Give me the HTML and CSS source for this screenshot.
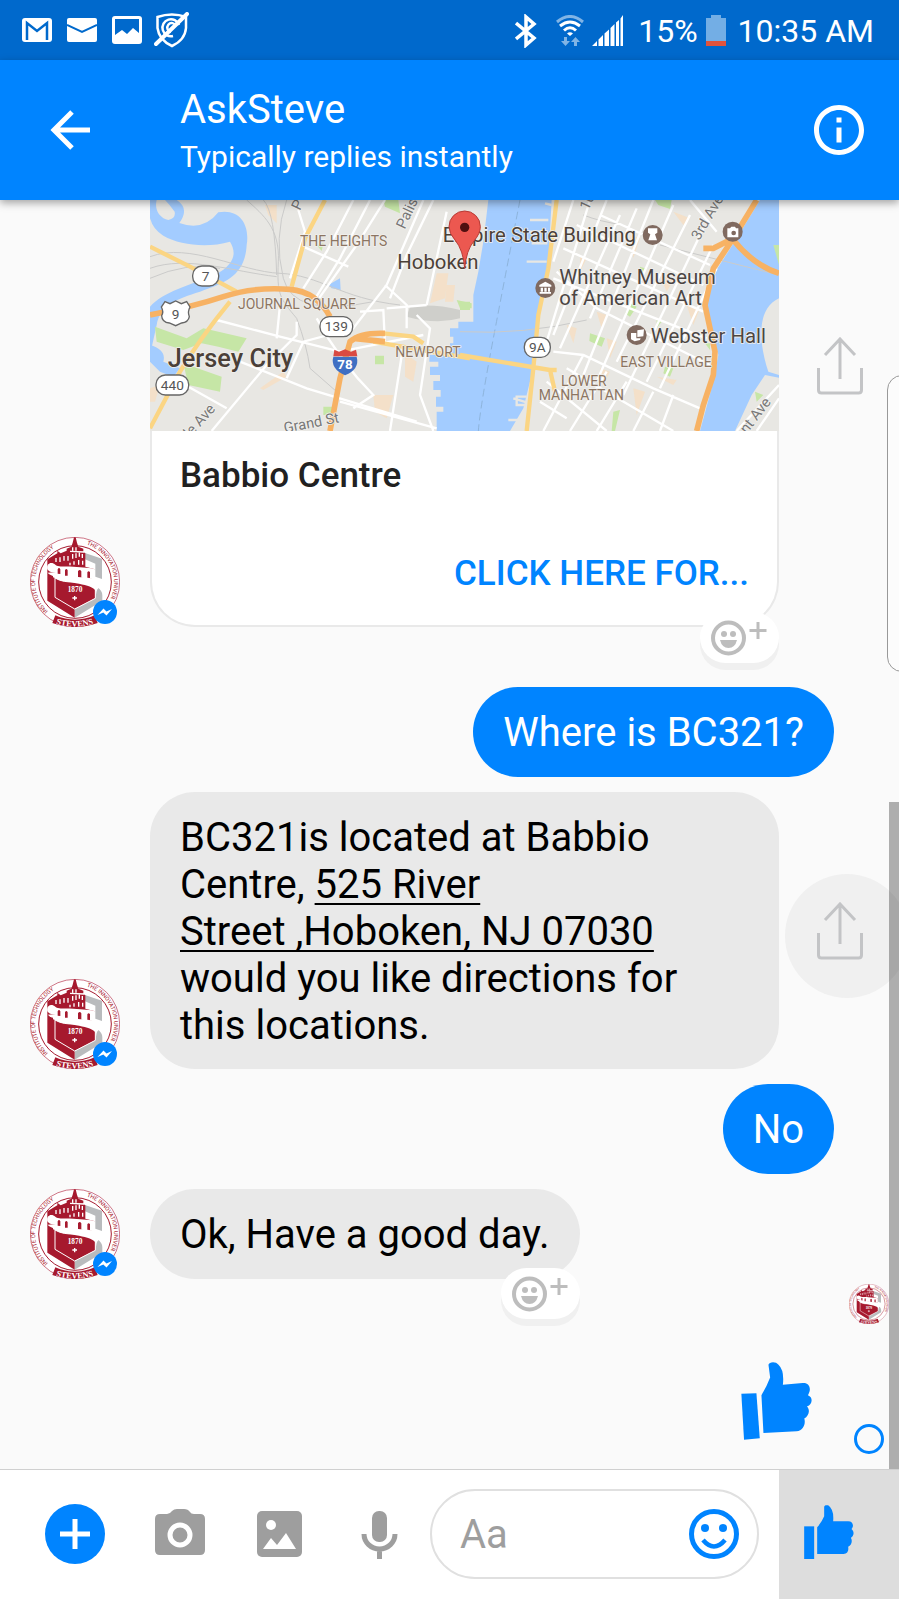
FILE: index.html
```html
<!DOCTYPE html>
<html lang="en">
<head>
<meta charset="utf-8">
<meta name="viewport" content="width=device-width, initial-scale=1">
<title>AskSteve</title>
<link rel="stylesheet" href="styles.css">
</head>
<body>

<svg class="defs" aria-hidden="true">
  <symbol id="seal" viewBox="30 21 270 270">
    <circle cx="165" cy="156" r="134" fill="#fff" stroke="#b5304a" stroke-width="2"/>
    <circle cx="165" cy="156" r="109" fill="none" stroke="#a6192e" stroke-width="3"/>
    <path id="arc-left" d="M84 244A119 119 0 0 1 144 39" fill="none"/>
    <path id="arc-right" d="M200 44A117 117 0 0 1 270 208" fill="none"/>
    <path id="arc-base" d="M108 281Q165 298 222 281" fill="none"/>
    <g font-family="Roboto, sans-serif" font-size="17" fill="#a6192e">
      <text><textPath href="#arc-left">INSTITUTE OF TECHNOLOGY</textPath></text>
      <text><textPath href="#arc-right">THE INNOVATION UNIVERSITY</textPath></text>
    </g>
    <path d="M195 69 246 86V147L226 140V101L195 88Z" fill="#b9bbbd"/>
    <path d="M232 172Q247 182 247 196L247 212 164 263V238L226 205Z" fill="#b9bbbd"/>
    <path d="M82 88 112 70V62L122 70 140 62V56L154 50 158 38 162 22H167L171 38 175 50 190 56V66L196 70V110L225 118V146L170 140 112 126 82 128Z" fill="#a6192e"/>
    <path d="M158 52V62M168 52V62M158 72V86M168 70V84M178 68V80M187 72V84M108 84V96M120 82V96M132 78V92M144 78V92M150 98V106M162 94V104M176 90V104M188 92V104M150 64 192 66" stroke="#fff" stroke-width="4"/>
    <path d="M82 118C78 98 96 94 106 104C112 112 138 108 160 110C188 113 214 112 225 118V148C190 142 150 144 120 132C104 126 90 130 82 118Z" fill="#fff"/>
    <path d="M113 131V118Q117 110 121 118V132ZM135 137V121Q139 113 143 121V137ZM174 141V124Q179 116 184 124V142ZM202 143V127Q206 120 210 127V144Z" fill="#a6192e"/>
    <path d="M82 127Q90 138 106 139V199L164 235V263L82 212Z" fill="#a6192e"/>
    <path d="M105 144C140 166 190 148 226 166V205L164 237 105 202Z" fill="#a6192e" stroke="#fff" stroke-width="3"/>
    <path d="M99 132C140 154 214 138 240 168L228 184C214 160 150 162 99 142Z" fill="#fff"/>
    <text x="165" y="187" text-anchor="middle" font-family="'Liberation Serif', serif" font-weight="700" font-size="22" fill="#fff">1870</text>
    <path d="M164 198V211M157 204H171" stroke="#fff" stroke-width="4"/>
    <path d="M106 256Q165 282 224 256L233 279Q165 303 97 279Z" fill="#a6192e"/>
    <text font-family="'Liberation Serif', serif" font-weight="700" font-size="25" fill="#fff"><textPath href="#arc-base">STEVENS</textPath></text>
  </symbol>
  <symbol id="bolt" viewBox="0 0 24 24">
    <circle cx="12" cy="12" r="12" fill="#0084ff"/>
    <path d="M4.500 15 10.500 8.500 13.500 11.500 19 9 13.500 15.500 10.300 12.500Z" fill="#fff"/>
  </symbol>
  <symbol id="share" viewBox="0 0 46 58">
    <path d="M1.500 31V53Q1.500 56 4.500 56H41.500Q44.500 56 44.500 53V31M23 42V3M8 18 23 2 38 18" fill="none" stroke="#c3c4c6" stroke-width="3"/>
  </symbol>
  <symbol id="react" viewBox="0 0 56 36">
    <circle cx="17.500" cy="18" r="15.500" fill="none" stroke="#bdbdbd" stroke-width="4"/>
    <circle cx="13" cy="14" r="3" fill="#bdbdbd"/><circle cx="22" cy="14" r="3" fill="#bdbdbd"/>
    <path d="M9 20H26Q24 28 17.500 28Q11 28 9 20Z" fill="#bdbdbd"/>
    <path d="M47 2V19M38.500 10.500H55.500" stroke="#bdbdbd" stroke-width="3"/>
  </symbol>
</svg>

<div class="status-bar">
  <div class="status-left">
    <svg width="30" height="24" viewBox="0 0 30 24"><rect width="30" height="24" rx="3" fill="#fff"/><path d="M5 22V5L15 13 25 5V22" fill="none" stroke="#0069cc" stroke-width="2.500"/></svg>
    <svg width="30" height="24" viewBox="0 0 30 24"><rect width="30" height="24" rx="2" fill="#fff"/><path d="M0 7 15 14 30 7" fill="none" stroke="#0069cc" stroke-width="2"/></svg>
    <svg width="30" height="28" viewBox="0 0 30 28"><rect width="30" height="28" rx="3" fill="#fff"/><path d="M3 3H27V17L21 12 15 18 10 14 3 19Z" fill="#0069cc"/></svg>
    <svg class="shield" width="35" height="36" viewBox="0 0 35 36" fill="none" stroke="#fff"><path d="M3.500 5Q18 0 32 5V16Q31 28 18 34Q5 28 3.500 16Z" stroke-width="2.500"/><path d="M25 13A8.500 8.500 0 1 0 19 24M22 14A4.500 4.500 0 1 0 17 20" stroke-width="2.500"/><path d="M2 32 33 2" stroke-width="4" stroke-linecap="round"/></svg>
  </div>
  <div class="status-right">
    <svg width="22" height="34" viewBox="0 0 22 34"><path d="M1 9 19 24 11 31V3L19 10 1 25" fill="none" stroke="#fff" stroke-width="3.500"/></svg>
    <svg class="wifi" width="28" height="32" viewBox="0 0 28 32" fill="none" stroke="#fff" stroke-width="3"><path d="M1 7Q14-4 27 7" opacity=".5"/><path d="M4 11Q14 3 24 11M8 15.500Q14 10 20 15.500"/><path d="M11 18.500Q14 16 17 18.500L14 21Z" fill="#fff" stroke="none"/><g fill="#fff" stroke="none" opacity=".5"><path d="M8 22H11V26H14L9.500 31 5 26H8Z"/><path d="M18 31H21V27H24L19.500 22 15 27H18Z"/></g></svg>
    <svg class="signal" width="32" height="31" viewBox="0 0 32 31" fill="#fff"><path d="M0 31 5 26V31ZM6.500 24.500 11 20V31H6.500ZM12.500 18.500 17 14.500V31H12.500ZM18.500 13 22.500 9V31H18.500ZM24 7.500 27 5V31H24ZM28.500 3.500 31 0V31H28.500Z"/></svg>
    <span>15%</span>
    <svg class="battery" width="20" height="31" viewBox="0 0 20 31"><path d="M0 3H5V0H15V3H20V26H0Z" fill="#73aee5"/><path d="M0 26H20V31H0Z" fill="#e0533c"/></svg>
    <time>10:35 AM</time>
  </div>
</div>

<header class="app-bar">
  <button class="icon-button back" aria-label="Back"><svg width="40" height="40" viewBox="0 0 40 40"><path d="M40 20H3M22 2 4 20 22 38" fill="none" stroke="#fff" stroke-width="5"/></svg></button>
  <div class="heading">
    <h1>AskSteve</h1>
    <p>Typically replies instantly</p>
  </div>
  <button class="icon-button" aria-label="Conversation info"><svg width="60" height="60" viewBox="0 0 24 24" fill="#fff"><path d="M11 17h2v-6h-2v6zm1-15C6.480 2 2 6.480 2 12s4.480 10 10 10 10-4.480 10-10S17.520 2 12 2zm0 18c-4.410 0-8-3.590-8-8s3.590-8 8-8 8 3.590 8 8-3.590 8-8 8zM11 9h2V7h-2v2z"/></svg></button>
</header>

<main class="chat">
  <section class="row incoming row-card">
    <div class="avatar"><svg class="seal"><use href="#seal"/></svg><svg class="badge"><use href="#bolt"/></svg></div>
    <article class="card">
      <svg class="map" viewBox="30 15 1887 693" preserveAspectRatio="xMidYMid slice" role="img" aria-label="Map of Hoboken">
        <rect x="30" y="15" width="1887" height="693" fill="#e8e7e3"/>
        <g fill="#a3ccff">
          <path d="M30 15H50C42 45 60 70 85 75Q108 70 104 50Q90 30 75 15H110Q150 40 118 84Q190 110 235 52C300 40 330 90 320 150C315 240 260 262 180 290C110 312 60 330 50 390L30 480V335C70 290 150 270 225 240C290 205 288 170 270 140C200 160 120 150 70 122Q40 105 30 70Z"/>
          <path d="M30 450Q80 465 70 500L120 520 100 545 60 530 30 500ZM155 525 185 550 170 560ZM565 270 600 250 602 285 575 280Z"/>
          <path d="M1045 15H1235L1225 200 1195 340 1180 520 1150 640 1110 708H890V650H910V635H888V605H902V585H880V558H900V540H870V515H895V500H868V480H930V445H940V425H930V400H955V380H1000V300L1015 230 1030 140Z"/>
          <path d="M1860 15H1917V310C1850 340 1855 440 1885 530L1917 540V548L1875 540 1835 600 1785 708H1680L1720 560 1735 480 1700 340 1720 240 1790 130Z"/>
        </g>
        <path d="M1160 605H1130V630H1165M1160 200H1220M1170 75H1225M1170 110H1220M1175 145H1222M1120 610 1170 625M1105 675H1165V708M1215 25 1235 30" fill="none" stroke="#e8e7e3" stroke-width="7"/>
        <path d="M810 335Q880 325 960 345V370Q890 390 800 365Z" fill="#cfcfcb"/>
        <g fill="#c6e6a6">
          <path d="M45 395 140 430 190 400 320 430 295 470 235 455 185 445 130 465 50 440ZM130 505 245 545 240 590 145 570ZM730 15H775L780 55 735 35ZM705 482H732V508H705ZM550 635H580V660H550ZM960 320H990V345H960ZM530 150 550 145 545 168Z"/>
          <path d="M1350 415 1395 430 1385 455 1348 438ZM1545 15H1595L1590 42 1555 30ZM1500 215 1515 220 1500 245ZM1475 325 1490 335 1470 365 1455 355ZM1550 375 1565 380 1550 400ZM1420 650 1440 645 1425 708H1415ZM1575 515 1600 520 1590 545 1570 535ZM1845 590 1870 600 1850 620ZM1900 150H1917V210ZM1695 445H1710V465ZM950 315 995 325V340H960Z"/>
        </g>
        <g fill="#f6dfc2" opacity=".8">
          <path d="M890 235H925L915 310 870 325ZM920 270H945L940 320H915ZM360 580 430 530 440 545 370 585ZM700 600H760L740 670 705 650ZM795 475 830 500 820 560 795 545ZM375 30H410V85L385 60ZM30 580 60 570 45 620H30Z"/>
          <path d="M1280 390 1310 400 1300 445ZM1370 350 1400 360 1385 400ZM1400 430 1430 440 1410 490ZM1480 580 1515 590 1490 660ZM1380 520 1410 530 1390 570ZM1560 240 1600 255 1580 290ZM1470 120 1500 130 1480 190ZM1600 50 1650 70 1630 90ZM1320 180 1340 190 1320 230ZM1640 330 1680 340 1660 390ZM1550 545 1610 555 1600 570Z"/>
        </g>
        <g fill="none" stroke="#cbcbca" stroke-width="3">
          <path d="M320 15C370 60 420 100 415 200S420 310 470 370Q500 450 510 520L590 590M370 15Q405 50 410 240M30 185C150 140 300 230 420 235S600 310 780 330M30 220C140 180 280 230 410 245M30 250Q140 200 240 220M440 15Q400 130 430 250T700 320"/>
          <path d="M1140 15Q1100 220 1060 430T1015 708" stroke="#8db4dc" stroke-dasharray="24 12"/>
          <path d="M960 410Q1150 420 1340 375M1560 150 1917 240M1330 60Q1380 80 1450 90"/>
        </g>
        <g fill="none" stroke="#fff" stroke-width="7">
          <path d="M475 45 495 110 450 250M640 15 560 170 490 280M690 15 600 190 520 320M735 15 650 150 530 320M850 15 740 270 640 400 490 440 440 550M880 15 800 180 750 310M920 50 860 330M490 155 625 215M735 270 800 330V400M230 375 420 425 600 470 850 420M470 380V420L380 510 215 708M300 500 500 580 830 680M420 330 410 430M530 370Q600 500 700 600L640 640M145 575 260 640M600 620 890 700M830 360 870 400 840 600 880 708M790 450 750 708M660 350 730 345 735 450M740 340 860 330"/>
          <path d="M1300 15 1240 200M1350 15 1220 440M1400 15 1240 420M1440 60 1260 460M1490 40 1350 370M1540 15 1330 540M1600 30 1370 560M1650 60 1430 500M1690 100 1450 600M1720 150 1520 560M1730 220 1560 580M1250 230 1370 340 1710 510M1380 60 1710 210M1310 90 1690 270M1270 160 1690 350M1240 250 1700 430M1240 470 1330 480 1540 580 1680 640M1220 560 1400 708M1280 520 1600 708M1200 620 1280 670M1330 480 1210 708M1400 530 1290 708M1460 560 1370 708M1540 590 1480 708M1600 600 1560 708M1917 570 1790 708M1917 610 1850 708M1650 15 1730 110"/>
        </g>
        <g fill="none" stroke="#fbd583" stroke-width="13">
          <path d="M30 155 150 215 290 290M555 15 495 130 455 275M270 320Q180 430 120 530L30 700M730 415 820 425 850 445M700 440 990 490"/>
          <path d="M960 480 1230 525 1245 590M1230 525H1250M1250 15 1225 220 1195 360 1180 520 1160 708"/>
        </g>
        <g fill="none" stroke="#f7b264" stroke-width="17">
          <path d="M30 360Q160 335 250 305T450 283Q530 290 570 365M735 415Q660 412 630 440L600 550 570 708M735 440 640 430"/>
          <path d="M1850 15 1780 130 1720 220 1695 330 1725 470 1720 540 1690 630 1670 708M1780 135Q1840 210 1917 235M1690 160H1720L1780 130"/>
        </g>
        <g font-family="Roboto, sans-serif" stroke="#f1f0ed" stroke-width="5" paint-order="stroke" stroke-linejoin="round">
          <g fill="#8c7562" font-size="42">
            <text x="480" y="153">THE HEIGHTS</text><text x="294" y="343">JOURNAL SQUARE</text><text x="766" y="485">NEWPORT</text>
            <text x="1441" y="517">EAST VILLAGE</text><text x="1263" y="574">LOWER</text><text x="1196" y="616">MANHATTAN</text>
          </g>
          <g fill="#4b4038">
            <text x="83" y="515" font-size="76" font-weight="500">Jersey City</text>
            <text x="772" y="221" font-size="61">Hoboken</text>
            <text x="908" y="140" font-size="61">Empire State Building</text>
          </g>
          <g fill="#4b4543" font-size="61">
            <text x="1258" y="268">Whitney Museum</text><text x="1258" y="330">of American Art</text><text x="1532" y="444">Webster Hall</text>
          </g>
          <g fill="#777" font-size="44">
            <text transform="translate(480 48) rotate(-65)">P</text><text transform="translate(794 104) rotate(-65)">Palisade</text><text transform="translate(150 730) rotate(-48)">le Ave</text>
            <text transform="translate(434 714) rotate(-11)">Grand St</text><text transform="translate(1345 48) rotate(-65)">10th</text><text transform="translate(1678 138) rotate(-60)">3rd Ave</text><text transform="translate(1820 718) rotate(-52)">nt Ave</text>
          </g>
        </g>
        <g fill="#fff" stroke="#666" stroke-width="4">
          <rect x="158" y="213" width="78" height="60" rx="28"/><rect x="540" y="365" width="98" height="60" rx="28"/><rect x="48" y="540" width="98" height="60" rx="28"/><rect x="1153" y="427" width="78" height="60" rx="28"/>
          <path d="M75 320 90 326 107 318 124 326 140 320 150 336Q142 350 148 365Q145 382 125 384L107 392 88 384Q66 382 65 362Q72 350 64 336Z"/>
        </g>
        <g font-family="Roboto, sans-serif" font-size="41" text-anchor="middle" fill="#555">
          <text x="197" y="258">7</text><text x="107" y="371">9</text><text x="589" y="409">139</text><text x="97" y="584">440</text><text x="1192" y="471">9A</text>
        </g>
        <path d="M580 485H650Q660 522 615 541Q570 520 580 485Z" fill="#3f6fc3"/><path d="M580 484 583 464 597 470 615 463 633 470 648 464 652 484Z" fill="#d94a42"/>
        <text x="615" y="522" font-family="Roboto, sans-serif" font-size="40" font-weight="700" text-anchor="middle" fill="#fff">78</text>
        <g fill="#806a60"><circle cx="1538" cy="120" r="30"/><circle cx="1216" cy="279" r="30"/><circle cx="1490" cy="420" r="30"/><circle cx="1778" cy="110" r="30"/></g>
        <g fill="#fff"><path d="M1524 100H1552V113L1545 118 1551 136H1525L1531 118 1524 113Z"/><path d="M1198 270 1216 260 1234 270V275H1198ZM1202 278H1209V290H1202ZM1213 278H1220V290H1213ZM1224 278H1230V290H1224ZM1199 291H1233V296H1199Z"/><path d="M1492 406 1512 403 1510 424 1492 426ZM1473 414H1489V430H1502L1500 435 1484 439 1473 433Z"/><path d="M1762 100H1770L1774 95H1785L1788 100H1795V127H1762Z"/></g>
        <circle cx="1781" cy="114" r="7" fill="#806a60"/>
        <path d="M974 220Q970 165 945 135Q927 115 927 95A47 47 0 0 1 1021 95Q1021 115 1002 138Q979 165 974 220Z" fill="#ec5850" stroke="#b93b36" stroke-width="3"/><circle cx="974" cy="97" r="14" fill="#501010"/>
      </svg>
      <div class="card-body">
        <h2>Babbio Centre</h2>
        <button class="card-action">CLICK HERE FOR...</button>
      </div>
      <button class="reaction" aria-label="Add reaction"><svg><use href="#react"/></svg></button>
    </article>
    <button class="share" aria-label="Share"><svg><use href="#share"/></svg></button>
  </section>

  <section class="row outgoing first-reply"><p class="bubble">Where is BC321?</p></section>

  <section class="row incoming">
    <div class="avatar"><svg class="seal"><use href="#seal"/></svg><svg class="badge"><use href="#bolt"/></svg></div>
    <p class="bubble">BC321is located at Babbio Centre, <a href="#map">525 River Street&nbsp;,Hoboken, NJ 07030</a> would you like directions for this locations.</p>
    <button class="share pressed" aria-label="Share"><svg><use href="#share"/></svg></button>
  </section>

  <section class="row outgoing"><p class="bubble">No</p></section>

  <section class="row incoming">
    <div class="avatar"><svg class="seal"><use href="#seal"/></svg><svg class="badge"><use href="#bolt"/></svg></div>
    <div class="bubble">Ok, Have a good day.<button class="reaction low" aria-label="Add reaction"><svg><use href="#react"/></svg></button></div>
  </section>

  <div class="seen"><svg width="40" height="40"><use href="#seal"/></svg></div>

  <section class="sticker">
    <svg width="71" height="79" viewBox="184 272 212 236" fill="#0084ff"><path d="M185 370 230 368 240 503 193 507Z"/><path d="M251 487 245 374Q262 345 271 321L266 283C268 274 288 272 296 283Q314 300 309 343L368 338C388 336 396 355 384 374C400 380 398 402 381 408C392 420 386 436 373 444C378 460 370 480 350 482Z"/></svg>
    <span class="sending"></span>
  </section>

  <div class="edge-handle"></div>
  <div class="scrollbar"></div>
</main>

<footer class="composer">
  <div class="tools">
    <button class="icon-button plus" aria-label="More"><svg width="60" height="60" viewBox="0 0 60 60"><circle cx="30" cy="30" r="30" fill="#0084ff"/><path d="M30 15V45M15 30H45" stroke="#fff" stroke-width="5"/></svg></button>
    <button class="icon-button" aria-label="Camera"><svg width="60" height="60" viewBox="0 0 60 60"><path d="M5 15Q5 10 10 10H17Q20 10 22 7Q24 5 27 5H34Q38 5 40 8Q41 10 44 10H50Q55 10 55 15V46Q55 51 50 51H10Q5 51 5 46Z" fill="#9e9e9e"/><circle cx="30" cy="31" r="10" fill="none" stroke="#fff" stroke-width="5"/></svg></button>
    <button class="icon-button" aria-label="Gallery"><svg width="60" height="60" viewBox="0 0 60 60"><rect x="7" y="7" width="45" height="46" rx="5" fill="#9e9e9e"/><circle cx="21" cy="21" r="5" fill="#fff"/><path d="M13 45 21 34 27 41 36 29 46 45Z" fill="#fff"/></svg></button>
    <button class="icon-button" aria-label="Voice"><svg width="60" height="60" viewBox="0 0 60 60"><rect x="22" y="7" width="15" height="31" rx="7" fill="#9e9e9e"/><path d="M14 30A15.500 15 0 0 0 45 30M29.500 45V55" fill="none" stroke="#9e9e9e" stroke-width="5"/></svg></button>
  </div>
  <div class="field">
    <input type="text" placeholder="Aa" aria-label="Message">
    <button class="icon-button" aria-label="Emoji"><svg width="50" height="50" viewBox="0 0 50 50" fill="#0084ff"><circle cx="25" cy="25" r="22.500" fill="none" stroke="#0084ff" stroke-width="5"/><circle cx="16" cy="19" r="4"/><circle cx="34" cy="19" r="4"/><path d="M14 31Q25 44 36 31" fill="none" stroke="#0084ff" stroke-width="4.500"/></svg></button>
  </div>
  <button class="like" aria-label="Send like"><svg width="50" height="54" viewBox="1152 165 149 162" fill="#0084ff"><path d="M1152 229H1182V327H1152Z"/><path d="M1191 312V232Q1205 216 1212 199V172C1212 165 1218 165 1224 166Q1242 178 1239 214H1284C1299 214 1302 229 1294 237C1303 244 1302 258 1292 263C1298 272 1294 286 1284 290C1286 302 1282 312 1270 312Z"/></svg></button>
</footer>

</body>
</html>
```

FILE: styles.css
```css
* { box-sizing: border-box; }

body {
  margin: 0;
  min-height: 100vh;
  display: flex;
  flex-direction: column;
  background: #fafafa;
  color: #000;
  font-family: Roboto, "Noto Sans", sans-serif;
  font-size: 40px;
}

h1, h2, p { margin: 0; font-weight: 400; }
svg { display: block; flex: none; }
.defs { position: absolute; width: 0; height: 0; }

button {
  padding: 0;
  border: 0;
  background: none;
  color: inherit;
  font: inherit;
}

.icon-button { display: flex; flex: none; }

/* Status bar */
.status-bar {
  height: 60px;
  display: flex;
  align-items: center;
  justify-content: space-between;
  padding: 0 25px 0 22px;
  background: #0069cc;
  color: #fff;
  font-size: 32px;
}
.status-left, .status-right { display: flex; align-items: center; }
.status-right { padding-top: 1px; }
.status-left { gap: 15px; }
.shield { margin-left: -3px; }
.wifi { margin-left: 19px; }
.signal { margin: 0 14px 0 8px; }
.battery { margin: 0 12px 0 8px; }

/* Conversation header */
.app-bar {
  position: relative;
  z-index: 2;
  height: 140px;
  display: flex;
  align-items: center;
  padding: 0 30px 0 50px;
  background: #0084ff;
  color: #fff;
  box-shadow: 0 3px 8px rgba(0, 0, 0, .35);
}
.heading { flex: 1; margin-left: 90px; padding-top: 6px; }
.heading h1 { font-size: 40px; line-height: 48px; }
.heading p { font-size: 30px; line-height: 46px; }

/* Messages */
.chat {
  position: relative;
  flex: 1;
  display: flex;
  flex-direction: column;
  gap: 15px;
  overflow: hidden;
}
.row.incoming {
  display: grid;
  grid-template-columns: 150px minmax(0, 1fr) 120px;
  align-items: end;
}
.row.outgoing {
  display: flex;
  justify-content: flex-end;
  padding: 0 65px 0 150px;
}
.first-reply { margin-top: 45px; }

.bubble {
  position: relative;
  justify-self: start;
  min-height: 90px;
  padding: 22px 30px 20px;
  border-radius: 45px;
  background: #e9e9e9;
  line-height: 47px;
}
.bubble a { color: inherit; text-decoration-thickness: 2px; text-underline-offset: 5px; text-decoration-skip-ink: none; }
.outgoing .bubble { background: #0084ff; color: #fff; }

.avatar { position: relative; width: 90px; height: 90px; margin-left: 30px; }
.seal { width: 90px; height: 90px; }
.badge { position: absolute; right: 3px; bottom: 3px; width: 24px; height: 24px; }

.card { position: relative; }
.map { width: 100%; height: 231px; }
.card-body {
  display: flex;
  flex-direction: column;
  gap: 50px;
  padding: 21px 28px 27px;
  border: 2px solid #e9e9e9;
  border-top: 0;
  border-radius: 0 0 45px 45px;
  background: #fff;
}
.card-body h2 { color: #212121; font-size: 35px; font-weight: 500; line-height: 48px; }
.card-action { align-self: flex-end; color: #0084ff; font-size: 35px; font-weight: 500; line-height: 48px; }

.reaction {
  position: absolute;
  right: 0;
  bottom: -36px;
  width: 79px;
  height: 51px;
  border-radius: 26px;
  background: #fff;
  box-shadow: 0 7px 0 #f0f0f0;
}
.reaction.low { bottom: -40px; }
.reaction svg { width: 56px; height: 36px; margin-left: 11px; }

.share {
  position: relative;
  align-self: center;
  justify-self: start;
  margin-left: 38px;
}
.share svg { position: relative; width: 46px; height: 58px; }
.row-card .share { align-self: start; margin-top: 137px; }
.pressed::before {
  content: "";
  position: absolute;
  top: -28px;
  left: -32px;
  width: 124px;
  height: 124px;
  border-radius: 50%;
  background: #f0f0f0;
}

.seen { display: flex; justify-content: flex-end; margin-top: -10px; padding-right: 10px; }
.sticker {
  display: flex;
  align-items: flex-start;
  justify-content: flex-end;
  gap: 42px;
  margin-top: 22px;
  padding: 0 15px 15px 0;
}
.sending { align-self: flex-end; width: 30px; height: 30px; margin-top: 63px; border: 3px solid #0084ff; border-radius: 50%; }

.edge-handle {
  position: absolute;
  top: 175px;
  right: -18px;
  width: 30px;
  height: 297px;
  border: 1px solid #999;
  border-radius: 16px;
  background: #fcfcfc;
}
.scrollbar { position: absolute; top: 602px; right: 0; bottom: 0; width: 10px; background: rgba(0, 0, 0, .3); }

/* Composer */
.composer {
  height: 130px;
  display: flex;
  align-items: center;
  gap: 20px;
  padding: 0 0 2px 45px;
  border-top: 1px solid #d0d0d0;
  background: #fff;
}
.tools { display: flex; gap: 40px; }
.plus { margin-right: 5px; }
.field {
  flex: 1;
  min-width: 0;
  height: 90px;
  display: flex;
  align-items: center;
  padding: 0 18px 0 28px;
  border: 2px solid #e0e0e0;
  border-radius: 45px;
}
.field input {
  flex: 1;
  min-width: 0;
  padding: 2px 0 0;
  border: 0;
  outline: 0;
  background: none;
  font: inherit;
}
.field input::placeholder { color: #9e9e9e; opacity: 1; }
.like { flex: none; align-self: stretch; width: 120px; margin-bottom: -2px; padding: 0 0 5px 25px; background: #ddd; }
```
